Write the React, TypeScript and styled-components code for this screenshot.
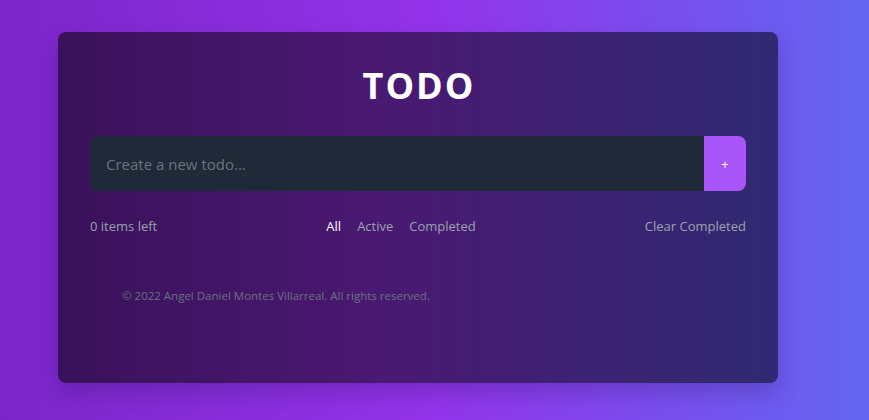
import React from "react";
import styled, { createGlobalStyle } from "styled-components";

const Global = createGlobalStyle`
  html, body { margin: 0; padding: 0; }
  body {
    font-family: "Open Sans", "Noto Sans", sans-serif;
    background: linear-gradient(90deg, #7b26c9 0%, #9333ea 50%, #6366f1 100%);
    min-height: 420px;
  }
`;

const Page = styled.div`
  width: 869px;
  height: 420px;
  box-sizing: border-box;
  padding: 32px 0 0 58px;
  background: linear-gradient(90deg, #7b26c9 0%, #9333ea 50%, #6366f1 100%);
`;

const Card = styled.div`
  width: 720px;
  height: 351px;
  box-sizing: border-box;
  border-radius: 8px;
  padding: 30px 32px 0;
  background: linear-gradient(90deg, #3a115b 0%, #4a1972 45%, #302a72 100%);
  box-shadow: 0 10px 20px rgba(40, 20, 90, 0.25);
  display: flex;
  flex-direction: column;
`;

const Title = styled.h1`
  margin: 0;
  text-align: center;
  color: #ffffff;
  font-size: 36px;
  font-weight: 700;
  letter-spacing: 2px;
  line-height: 48px;
  padding-left: 2px;
`;

const Form = styled.form`
  display: flex;
  margin-top: 26px;
  height: 55px;
`;

const Input = styled.input`
  flex: 1;
  border: none;
  outline: none;
  background: #1f2937;
  color: #e5e7eb;
  border-radius: 8px 0 0 8px;
  padding: 0 16px;
  font-family: "Open Sans", "Noto Sans", sans-serif;
  font-size: 15px;
  &::placeholder { color: #6b7280; }
`;

const AddButton = styled.button`
  width: 42px;
  border: none;
  background: #a855f7;
  color: #ffffff;
  border-radius: 0 8px 8px 0;
  font-family: "Open Sans", sans-serif;
  font-size: 13px;
  padding: 0;
  cursor: pointer;
`;

const Footer = styled.div`
  display: flex;
  justify-content: space-between;
  align-items: center;
  margin-top: 26px;
  font-size: 13px;
  color: #9ca3af;
`;

const Left = styled.span``;

const Filters = styled.div`
  display: flex;
  gap: 16px;
`;

const Filter = styled.span<{ $active?: boolean }>`
  color: ${(p) => (p.$active ? "#ffffff" : "#9ca3af")};
`;

const Clear = styled.span``;

const Copy = styled.p`
  margin: 53px 0 0 32px;
  font-size: 11.5px;
  color: #6b7280;
`;

export default function App() {
  return (
    <>
      <Global />
      <Page>
        <Card>
          <Title>TODO</Title>
          <Form onSubmit={(e) => e.preventDefault()}>
            <Input placeholder="Create a new todo..." />
            <AddButton type="submit">+</AddButton>
          </Form>
          <Footer>
            <Left>0 items left</Left>
            <Filters>
              <Filter $active>All</Filter>
              <Filter>Active</Filter>
              <Filter>Completed</Filter>
            </Filters>
            <Clear>Clear Completed</Clear>
          </Footer>
          <Copy>© 2022 Angel Daniel Montes Villarreal. All rights reserved.</Copy>
        </Card>
      </Page>
    </>
  );
}
